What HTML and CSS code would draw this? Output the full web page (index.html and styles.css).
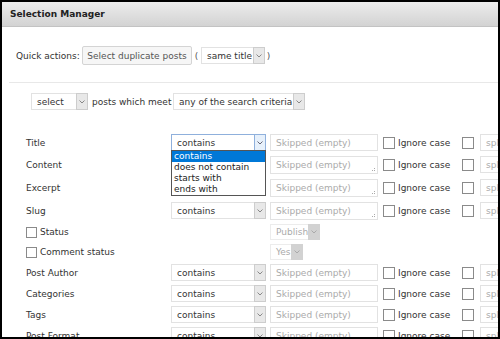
FILE: index.html
```html
<!DOCTYPE html>
<html>
<head>
<meta charset="utf-8">
<link rel="stylesheet" href="styles.css">
</head>
<body>
<div class="frame">
  <div class="header">Selection Manager</div>

  <div class="quick">
    <span class="qlabel">Quick actions:</span>
    <span class="btn">Select duplicate posts</span>
    <span class="paren">(</span>
    <div class="sel w-same"><span class="val">same title</span><span class="arr"><svg width="6" height="4" viewBox="0 0 6 4"><polyline points="0.5,0.5 3,3 5.5,0.5" fill="none" stroke="#888" stroke-width="1"/></svg></span></div>
    <span class="paren">)</span>
  </div>

  <div class="sep"></div>

  <div class="criteria">
    <div class="sel w-select"><span class="val">select</span><span class="arr"><svg width="6" height="4" viewBox="0 0 6 4"><polyline points="0.5,0.5 3,3 5.5,0.5" fill="none" stroke="#888" stroke-width="1"/></svg></span></div>
    <span class="ctext">posts which meet</span>
    <div class="sel w-any"><span class="val">any of the search criteria</span><span class="arr"><svg width="6" height="4" viewBox="0 0 6 4"><polyline points="0.5,0.5 3,3 5.5,0.5" fill="none" stroke="#888" stroke-width="1"/></svg></span></div>
  </div>

  <div class="fields">
    <div class="row r-in">
      <div class="label">Title</div>
      <div class="sel w-cond focus"><span class="val">contains</span><span class="arr"><svg width="6" height="4" viewBox="0 0 6 4"><polyline points="0.5,0.5 3,3 5.5,0.5" fill="none" stroke="#667" stroke-width="1"/></svg></span>
        <div class="dropdown">
          <div class="opt on">contains</div>
          <div class="opt">does not contain</div>
          <div class="opt">starts with</div>
          <div class="opt">ends with</div>
        </div>
      </div>
      <div class="inp">Skipped (empty)</div>
      <span class="cb"></span><span class="ic">Ignore case</span><span class="cb"></span>
      <div class="inp split">split</div>
    </div>

    <div class="row r-ta">
      <div class="label">Content</div>
      <div class="sel w-cond"><span class="val">contains</span><span class="arr"><svg width="6" height="4" viewBox="0 0 6 4"><polyline points="0.5,0.5 3,3 5.5,0.5" fill="none" stroke="#888" stroke-width="1"/></svg></span></div>
      <div class="inp ta">Skipped (empty)<svg class="grip" width="5" height="5" viewBox="0 0 5 5"><rect x="4" y="1" width="1" height="1" fill="#aaa"/><rect x="2" y="3" width="1" height="1" fill="#aaa"/><rect x="4" y="3" width="1" height="1" fill="#aaa"/></svg></div>
      <span class="cb"></span><span class="ic">Ignore case</span><span class="cb"></span>
      <div class="inp split">split</div>
    </div>

    <div class="row r-ta">
      <div class="label">Excerpt</div>
      <div class="sel w-cond"><span class="val">contains</span><span class="arr"><svg width="6" height="4" viewBox="0 0 6 4"><polyline points="0.5,0.5 3,3 5.5,0.5" fill="none" stroke="#888" stroke-width="1"/></svg></span></div>
      <div class="inp ta">Skipped (empty)<svg class="grip" width="5" height="5" viewBox="0 0 5 5"><rect x="4" y="1" width="1" height="1" fill="#aaa"/><rect x="2" y="3" width="1" height="1" fill="#aaa"/><rect x="4" y="3" width="1" height="1" fill="#aaa"/></svg></div>
      <span class="cb"></span><span class="ic">Ignore case</span><span class="cb"></span>
      <div class="inp split">split</div>
    </div>

    <div class="row r-ta">
      <div class="label">Slug</div>
      <div class="sel w-cond"><span class="val">contains</span><span class="arr"><svg width="6" height="4" viewBox="0 0 6 4"><polyline points="0.5,0.5 3,3 5.5,0.5" fill="none" stroke="#888" stroke-width="1"/></svg></span></div>
      <div class="inp ta">Skipped (empty)<svg class="grip" width="5" height="5" viewBox="0 0 5 5"><rect x="4" y="1" width="1" height="1" fill="#aaa"/><rect x="2" y="3" width="1" height="1" fill="#aaa"/><rect x="4" y="3" width="1" height="1" fill="#aaa"/></svg></div>
      <span class="cb"></span><span class="ic">Ignore case</span><span class="cb"></span>
      <div class="inp split">split</div>
    </div>

    <div class="row r-st">
      <div class="label"><span class="cb small"></span>Status</div>
      <div class="spacer"></div>
      <div class="sel dis w-pub"><span class="val">Publish</span><span class="arr"><svg width="6" height="4" viewBox="0 0 6 4"><polyline points="0.5,0.5 3,3 5.5,0.5" fill="none" stroke="#aaa" stroke-width="1"/></svg></span></div>
    </div>

    <div class="row r-st">
      <div class="label"><span class="cb small"></span>Comment status</div>
      <div class="spacer"></div>
      <div class="sel dis w-yes"><span class="val">Yes</span><span class="arr"><svg width="6" height="4" viewBox="0 0 6 4"><polyline points="0.5,0.5 3,3 5.5,0.5" fill="none" stroke="#aaa" stroke-width="1"/></svg></span></div>
    </div>

    <div class="row r-in">
      <div class="label">Post Author</div>
      <div class="sel w-cond"><span class="val">contains</span><span class="arr"><svg width="6" height="4" viewBox="0 0 6 4"><polyline points="0.5,0.5 3,3 5.5,0.5" fill="none" stroke="#888" stroke-width="1"/></svg></span></div>
      <div class="inp">Skipped (empty)</div>
      <span class="cb"></span><span class="ic">Ignore case</span><span class="cb"></span>
      <div class="inp split">split</div>
    </div>

    <div class="row r-in">
      <div class="label">Categories</div>
      <div class="sel w-cond"><span class="val">contains</span><span class="arr"><svg width="6" height="4" viewBox="0 0 6 4"><polyline points="0.5,0.5 3,3 5.5,0.5" fill="none" stroke="#888" stroke-width="1"/></svg></span></div>
      <div class="inp">Skipped (empty)</div>
      <span class="cb"></span><span class="ic">Ignore case</span><span class="cb"></span>
      <div class="inp split">split</div>
    </div>

    <div class="row r-in">
      <div class="label">Tags</div>
      <div class="sel w-cond"><span class="val">contains</span><span class="arr"><svg width="6" height="4" viewBox="0 0 6 4"><polyline points="0.5,0.5 3,3 5.5,0.5" fill="none" stroke="#888" stroke-width="1"/></svg></span></div>
      <div class="inp">Skipped (empty)</div>
      <span class="cb"></span><span class="ic">Ignore case</span><span class="cb"></span>
      <div class="inp split">split</div>
    </div>

    <div class="row r-in">
      <div class="label">Post Format</div>
      <div class="sel w-cond"><span class="val">contains</span><span class="arr"><svg width="6" height="4" viewBox="0 0 6 4"><polyline points="0.5,0.5 3,3 5.5,0.5" fill="none" stroke="#888" stroke-width="1"/></svg></span></div>
      <div class="inp">Skipped (empty)</div>
      <span class="cb"></span><span class="ic">Ignore case</span><span class="cb"></span>
      <div class="inp split">split</div>
    </div>
  </div>
</div>
</body>
</html>
```

FILE: styles.css
```css
* { box-sizing: border-box; }
body {
  margin: 0;
  font-family: "DejaVu Sans", Verdana, sans-serif;
  font-size: 9px;
  color: #333;
  background: #fff;
}
.frame {
  width: 500px;
  height: 339px;
  border: 2px solid #000;
  overflow: hidden;
  position: relative;
  background: #fff;
}
.header {
  height: 25px;
  background: linear-gradient(#ececec, #d3d3d3);
  border-bottom: 1px solid #c3c3c3;
  padding-left: 8px;
  display: flex;
  align-items: center;
  font-weight: bold;
  color: #222;
}
.quick {
  display: flex;
  align-items: center;
  height: 21px;
  margin-top: 18px;
  padding-left: 14px;
}
.qlabel { width: 66px; flex-shrink: 0; white-space: nowrap; }
.btn {
  width: 110px;
  height: 19px;
  flex-shrink: 0;
  border: 1px solid #d4d4d4;
  border-radius: 2px;
  background: #f6f6f6;
  color: #555;
  display: flex;
  align-items: center;
  justify-content: center;
  white-space: nowrap;
}
.paren { width: 5px; text-align: center; margin: 0 0 0 2px; color: #555; flex-shrink: 0; }
.paren + .sel { margin-left: 2px; }
.sel + .paren { margin-left: 1px; }
.sep {
  height: 1px;
  margin: 16px 0 0 7px;
  background: #e8e8e8;
}
.criteria {
  display: flex;
  align-items: center;
  height: 17px;
  margin-top: 10px;
  padding-left: 29px;
}
.ctext { width: 81px; margin-left: 4px; flex-shrink: 0; white-space: nowrap; }

/* select boxes */
.sel {
  position: relative;
  display: flex;
  align-items: stretch;
  height: 17px;
  border: 1px solid #e2e2e2;
  background: #fff;
  flex-shrink: 0;
}
.sel .val {
  flex: 1;
  padding-left: 5px;
  display: flex;
  align-items: center;
  white-space: nowrap;
  overflow: hidden;
}
.sel .arr {
  width: 12px;
  margin: -1px -1px -1px 0;
  border: 1px solid #cdcdcd;
  background: #e8e8e8;
  display: flex;
  align-items: center;
  justify-content: center;
}
.w-same { width: 64px; }
.w-select { width: 57px; height: 17px; }
.w-any { width: 132px; }
.w-cond { width: 95px; }
.w-pub { width: 50px; height: 16px; }
.w-yes { width: 33px; height: 16px; }
.sel.focus { border-color: #8fb0dc; }
.sel.focus .arr { border-color: #8fb0dc; background: #e6f0fb; }
.sel.dis { color: #aaa; border-color: #ececec; }
.sel.dis .arr { background: #d2d2d2; border-color: #d2d2d2; }

.dropdown {
  position: absolute;
  top: 15px;
  left: -1px;
  width: 95px;
  border: 1px solid #555;
  background: #fff;
  z-index: 5;
  color: #222;
}
.opt {
  height: 11px;
  line-height: 11px;
  padding-left: 2px;
  white-space: nowrap;
}
.opt.on { background: #0078d7; color: #fff; }

/* field rows */
.fields {
  display: flex;
  flex-direction: column;
  gap: 4px;
  margin-top: 24px;
  padding-left: 24px;
}
.row {
  display: flex;
  align-items: center;
}
.r-in { height: 17px; }
.r-ta { height: 19px; }
.r-st { height: 16px; }
.label {
  width: 145px;
  flex-shrink: 0;
  display: flex;
  align-items: center;
  white-space: nowrap;
}
.spacer { width: 99px; flex-shrink: 0; }
.inp {
  position: relative;
  width: 108px;
  height: 17px;
  margin-left: 4px;
  flex-shrink: 0;
  border: 1px solid #e2e2e2;
  color: #aaa;
  padding-left: 5px;
  display: flex;
  align-items: center;
  white-space: nowrap;
  overflow: hidden;
}
.inp.ta { height: 18px; }
.grip { position: absolute; right: 2px; bottom: 1px; }
.cb {
  width: 12px;
  height: 12px;
  flex-shrink: 0;
  border: 1px solid #8a8a8a;
  background: #fff;
}
.row > .cb { margin-left: 5px; }
.cb.small { width: 11px; height: 11px; margin-right: 3px; border-color: #8a8a8a; }
.ic { width: 64px; margin-left: 3px; flex-shrink: 0; white-space: nowrap; color: #333; }
.ic + .cb { margin-left: 0 !important; }
.inp.split { width: 60px; margin-left: 6px; }
```
